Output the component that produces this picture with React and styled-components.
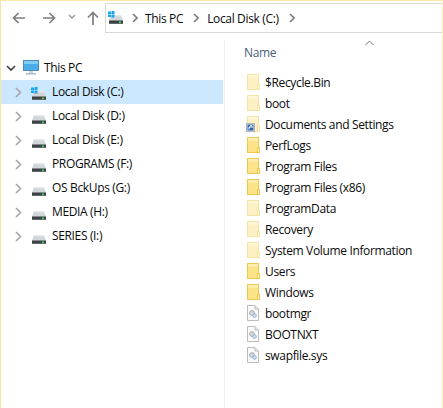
import React from 'react'
import styled, { createGlobalStyle } from 'styled-components'

const GlobalStyle = createGlobalStyle`
  html, body {
    margin: 0;
    padding: 0;
    background: #fff;
  }
  body {
    font-family: "Open Sans", "Noto Sans", sans-serif;
    font-size: 12px;
    letter-spacing: -0.35px;
    color: #0a0a0a;
  }
`

const Window = styled.div`
  width: 443px;
  height: 408px;
  box-sizing: border-box;
  border-top: 1px solid #fdeaa8;
  border-left: 1px solid #fbe6a0;
  border-right: 1px solid #fdf0c4;
  overflow: hidden;
  display: flex;
  flex-direction: column;
`

const Toolbar = styled.div`
  height: 30px;
  padding-top: 2px;
  display: flex;
  align-items: stretch;
`

const NavButtons = styled.div`
  width: 104px;
  flex: none;
  display: flex;
  align-items: center;
`

const NavIcon = styled.svg`
  flex: none;
  margin-left: ${p => p.$gap}px;
  margin-top: ${p => p.$top || 0}px;
`

const AddressBar = styled.div`
  flex: 1;
  display: flex;
  align-items: center;
  border: 1px solid #d9d9d9;
  border-right: none;
  padding-left: 2px;
`

const AddressDrive = styled.span`
  display: flex;
  margin-top: -4px;
`

const Crumb = styled.span`
  margin-left: ${p => p.$gap}px;
  white-space: nowrap;
`

const Chevron = styled.svg`
  flex: none;
  margin-left: ${p => p.$gap || 0}px;
`

const Body = styled.div`
  flex: 1;
  display: flex;
  min-height: 0;
`

const Sidebar = styled.nav`
  width: 224px;
  flex: none;
  box-sizing: border-box;
  margin-top: 7px;
  border-right: 1px solid #f0f0f0;
  padding-top: 16px;
`

const TreeRow = styled.div`
  height: 24px;
  width: 222px;
  display: flex;
  align-items: center;
  background: ${p => (p.$selected ? '#cce8ff' : 'transparent')};
`

const Expander = styled.svg`
  flex: none;
  margin-left: ${p => p.$left}px;
`

const TreeIcon = styled.span`
  display: flex;
  flex: none;
  margin-left: ${p => p.$gap}px;
`

const TreeLabel = styled.span`
  margin-left: ${p => p.$gap}px;
  margin-bottom: 2px;
  white-space: nowrap;
`

const Content = styled.main`
  flex: 1;
  position: relative;
  padding-left: 19px;
`

const SortCaret = styled.svg`
  position: absolute;
  left: 140px;
  top: 7px;
`

const NameHeader = styled.div`
  height: 25px;
  margin-top: 11px;
  color: #4c607a;
  line-height: 18px;
`

const FileList = styled.div`
  margin-top: 3px;
  display: flex;
  flex-direction: column;
`

const FileRow = styled.div`
  height: 21px;
  display: flex;
  align-items: center;
  white-space: nowrap;
`

const IconSlot = styled.span`
  width: 18px;
  flex: none;
  margin-left: 3px;
  margin-top: -1px;
  position: relative;
  display: flex;
  align-items: center;
`

const ShortcutBadge = styled.svg`
  position: absolute;
  left: -1px;
  bottom: 0;
`

const Drive = ({ windows }) => (
  <svg width="16" height="16" viewBox="0 0 16 16">
    <path d="M3 7 H13 L15 13 H1 Z" fill="#d3d6d9" />
    <path d="M3 7 H13 L13.5 8.5 H2.5 Z" fill="#e6e8ea" />
    {windows && (
      <g fill="#19a5ef">
        <rect x="0" y="3.5" width="3" height="2.5" />
        <rect x="3.5" y="3" width="3" height="3" />
        <rect x="0" y="6.5" width="3" height="2.5" />
        <rect x="3.5" y="6.5" width="3" height="3" />
      </g>
    )}
    <rect x="1" y="12.5" width="14" height="3.5" fill="#3d4144" />
    <rect x="1" y="15.5" width="14" height="0.5" fill="#8d9194" />
    <rect x="11" y="13.5" width="2" height="1.5" fill="#47e04f" />
  </svg>
)

const Monitor = () => (
  <svg width="18" height="16" viewBox="0 0 18 16">
    <rect x="0.5" y="0.5" width="15" height="10" fill="#49aee8" stroke="#4f8bb8" />
    <rect x="1" y="1" width="14" height="3" fill="#7fcdf5" />
    <rect x="6" y="11" width="4" height="2" fill="#c6d6e4" />
    <rect x="3" y="13" width="10" height="1.5" fill="#a6bccf" />
  </svg>
)

const Folder = ({ dim }) => (
  <svg width="13" height="16" viewBox="0 0 13 16" opacity={dim ? 0.5 : 1}>
    <rect x="0.5" y="0.5" width="11" height="15" fill="#fde48a" stroke="#eec94f" />
    <rect x="1" y="1" width="10" height="2.5" fill="#fdeeb4" />
    <rect x="10.5" y="10.5" width="2" height="5" fill="#fff3c4" stroke="#eec94f" />
  </svg>
)

const SystemFile = () => (
  <svg width="12" height="16" viewBox="0 0 12 16">
    <path d="M0.5 0.5 H8 L11.5 4 V15.5 H0.5 Z" fill="#fafafa" stroke="#bcbcbc" />
    <path d="M8 0.5 V4 H11.5" fill="#e8e8e8" stroke="#bcbcbc" />
    <circle cx="5" cy="8" r="2.4" fill="#d4d8dc" stroke="#a9aeb3" />
    <circle cx="7.5" cy="10.5" r="1.8" fill="#cfe3f5" stroke="#8fb3d1" />
  </svg>
)

const treeItems = [
  { label: 'Local Disk (C:)', windows: true, selected: true },
  { label: 'Local Disk (D:)' },
  { label: 'Local Disk (E:)' },
  { label: 'PROGRAMS (F:)' },
  { label: 'OS BckUps (G:)' },
  { label: 'MEDIA (H:)' },
  { label: 'SERIES (I:)' },
]

const files = [
  { name: '$Recycle.Bin', type: 'dim' },
  { name: 'boot', type: 'dim' },
  { name: 'Documents and Settings', type: 'shortcut' },
  { name: 'PerfLogs', type: 'folder' },
  { name: 'Program Files', type: 'folder' },
  { name: 'Program Files (x86)', type: 'folder' },
  { name: 'ProgramData', type: 'dim' },
  { name: 'Recovery', type: 'dim' },
  { name: 'System Volume Information', type: 'dim' },
  { name: 'Users', type: 'folder' },
  { name: 'Windows', type: 'folder' },
  { name: 'bootmgr', type: 'file' },
  { name: 'BOOTNXT', type: 'file' },
  { name: 'swapfile.sys', type: 'file' },
]

const CrumbChevron = ({ gap }) => (
  <Chevron $gap={gap} width="6" height="10" viewBox="0 0 6 10">
    <path d="M1 1 L5 5 L1 9" fill="none" stroke="#7f7f7f" strokeWidth="1.6" />
  </Chevron>
)

const FileIcon = ({ type }) => {
  if (type === 'file') return <SystemFile />
  return <Folder dim={type === 'dim' || type === 'shortcut'} />
}

export default function App () {
  return (
    <Window>
      <GlobalStyle />
      <Toolbar>
        <NavButtons>
          <NavIcon $gap={11} width="14" height="12" viewBox="0 0 14 12">
            <path d="M13 6 H2 M6.5 1 L1.5 6 L6.5 11" fill="none" stroke="#7d7d7d" strokeWidth="1.7" />
          </NavIcon>
          <NavIcon $gap={16} width="14" height="12" viewBox="0 0 14 12">
            <path d="M1 6 H12 M7.5 1 L12.5 6 L7.5 11" fill="none" stroke="#7d7d7d" strokeWidth="1.7" />
          </NavIcon>
          <NavIcon $gap={12} $top={-3} width="8" height="6" viewBox="0 0 8 6">
            <path d="M1 1 L4 4 L7 1" fill="none" stroke="#9a9a9a" strokeWidth="1.5" />
          </NavIcon>
          <NavIcon $gap={11} width="12" height="14" viewBox="0 0 12 14">
            <path d="M6 14 V2 M1 6.5 L6 1.5 L11 6.5" fill="none" stroke="#7d7d7d" strokeWidth="1.7" />
          </NavIcon>
        </NavButtons>
        <AddressBar>
          <AddressDrive><Drive windows /></AddressDrive>
          <CrumbChevron gap={8} />
          <Crumb $gap={7}>This PC</Crumb>
          <CrumbChevron gap={10} />
          <Crumb $gap={8}>Local Disk (C:)</Crumb>
          <CrumbChevron gap={10} />
        </AddressBar>
      </Toolbar>
      <Body>
        <Sidebar>
          <TreeRow>
            <Expander $left={5} width="10" height="7" viewBox="0 0 10 7">
              <path d="M1 1 L5 5 L9 1" fill="none" stroke="#404040" strokeWidth="1.6" />
            </Expander>
            <TreeIcon $gap={7}><Monitor /></TreeIcon>
            <TreeLabel $gap={3}>This PC</TreeLabel>
          </TreeRow>
          {treeItems.map(item => (
            <TreeRow key={item.label} $selected={item.selected}>
              <Expander $left={14} width="7" height="11" viewBox="0 0 7 11">
                <path d="M1 1 L5.5 5.5 L1 10" fill="none" stroke="#a6a6a6" strokeWidth="1.6" />
              </Expander>
              <TreeIcon $gap={9}><Drive windows={item.windows} /></TreeIcon>
              <TreeLabel $gap={5}>{item.label}</TreeLabel>
            </TreeRow>
          ))}
        </Sidebar>
        <Content>
          <SortCaret width="9" height="6" viewBox="0 0 9 6">
            <path d="M0.5 5 L4.5 1 L8.5 5" fill="none" stroke="#707070" strokeWidth="1" />
          </SortCaret>
          <NameHeader>Name</NameHeader>
          <FileList>
            {files.map(f => (
              <FileRow key={f.name}>
                <IconSlot>
                  <FileIcon type={f.type} />
                  {f.type === 'shortcut' && (
                    <ShortcutBadge width="9" height="9" viewBox="0 0 9 9">
                      <rect x="0.5" y="0.5" width="8" height="8" fill="#e8e8e8" stroke="#b5b5b5" />
                      <rect x="1.5" y="1.5" width="6" height="6" fill="#2a66b5" />
                      <path d="M3 6.5 V4 H5 M4 2.8 H6 V5" fill="none" stroke="#fff" strokeWidth="1" />
                    </ShortcutBadge>
                  )}
                </IconSlot>
                {f.name}
              </FileRow>
            ))}
          </FileList>
        </Content>
      </Body>
    </Window>
  )
}
